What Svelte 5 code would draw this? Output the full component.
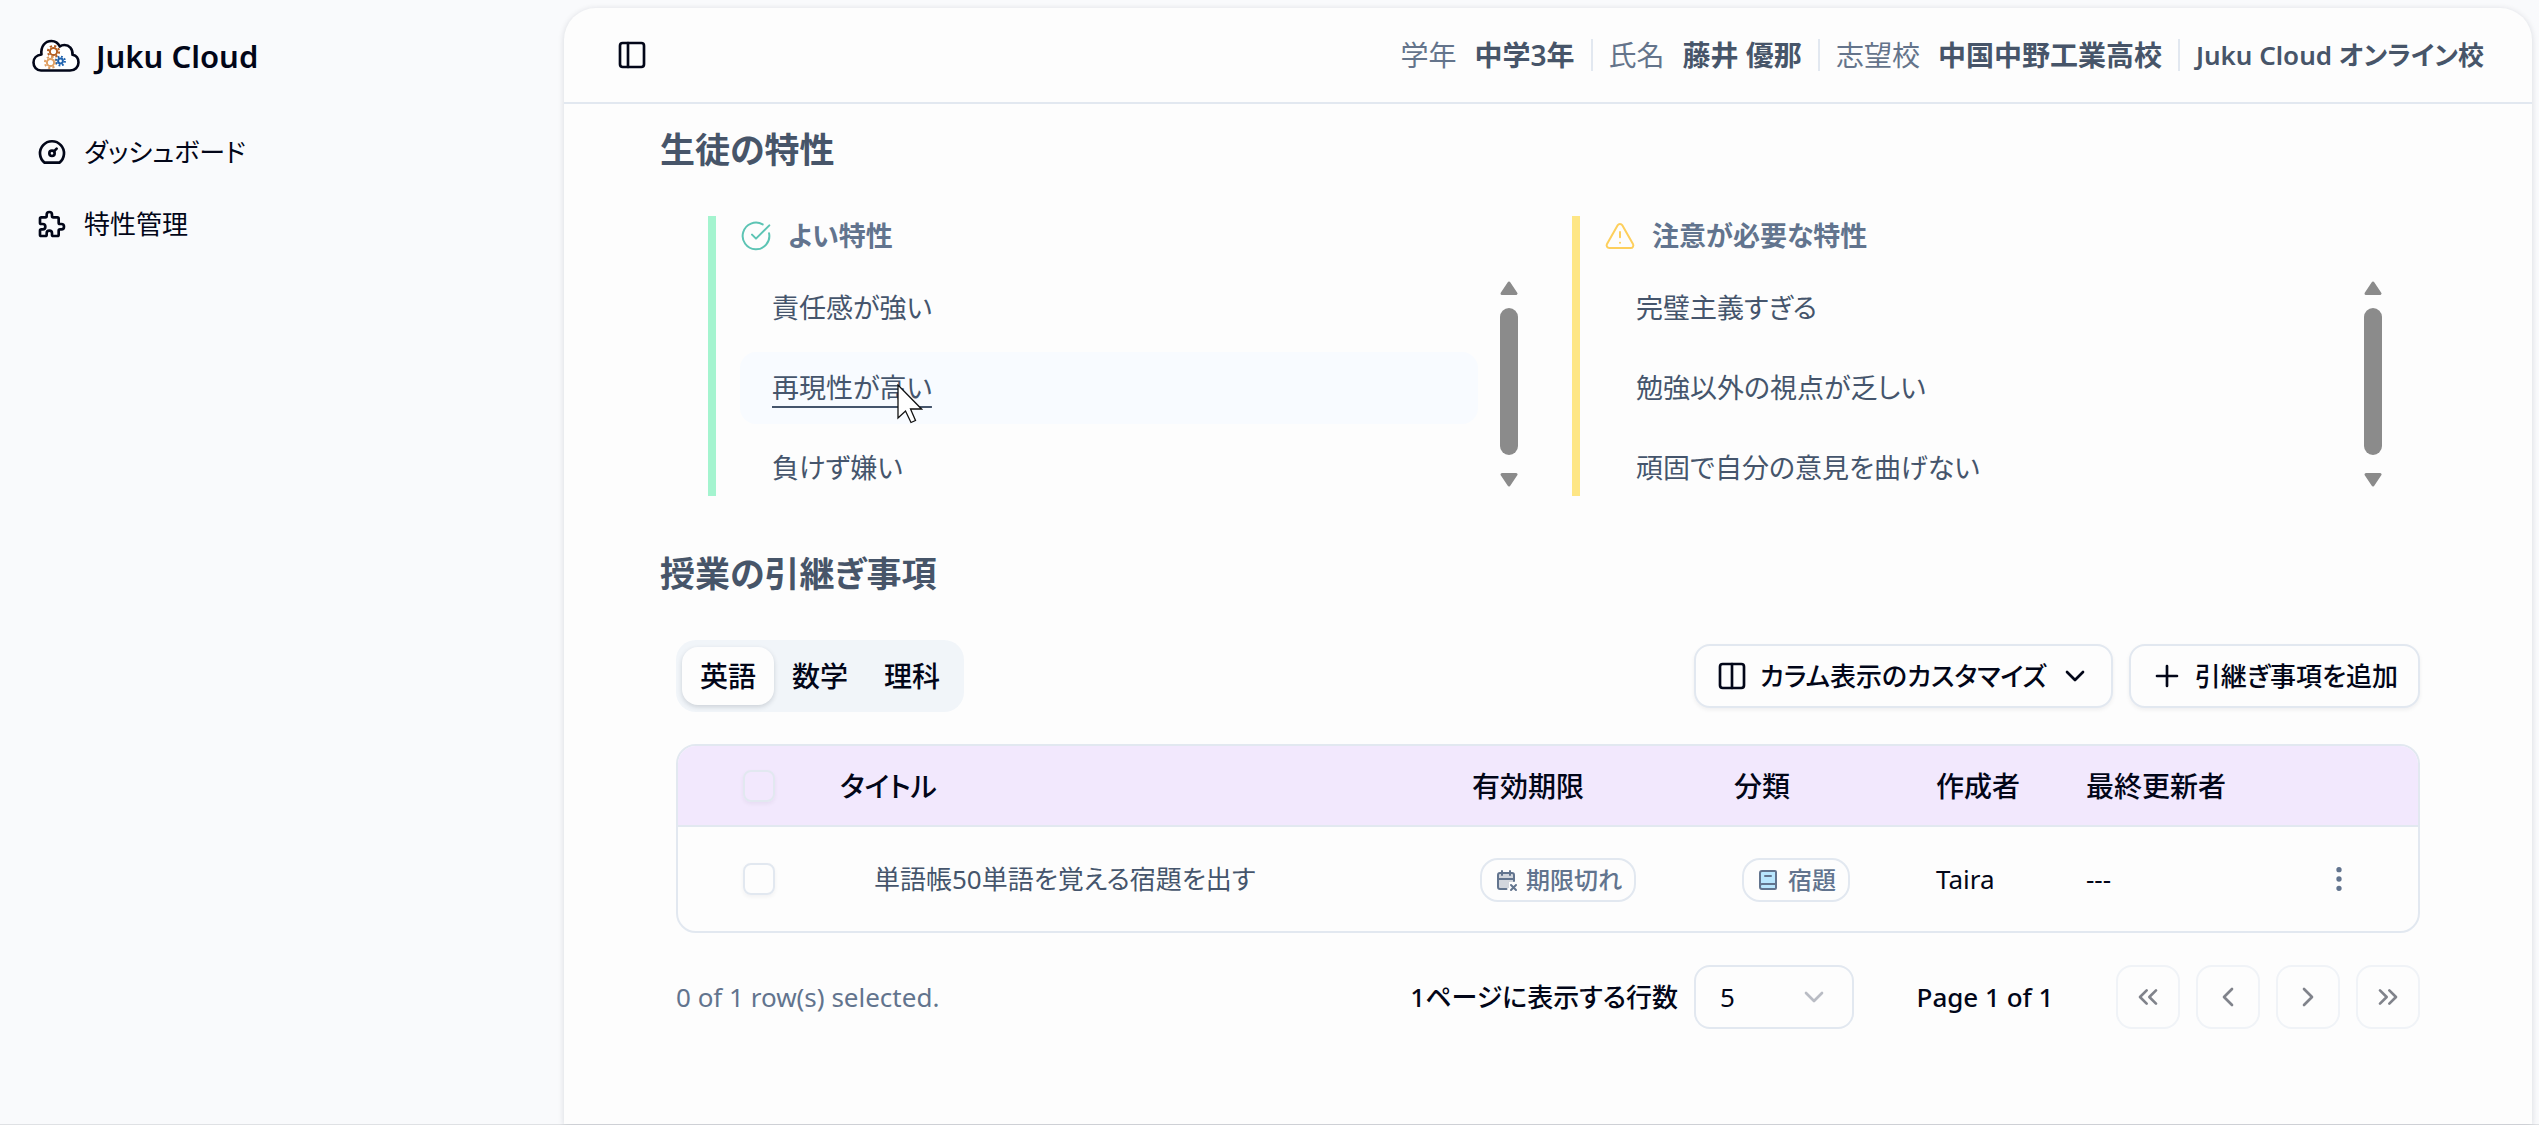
<script>
  const nav = [
    { label: 'ダッシュボード', icon: 'gauge' },
    { label: '特性管理', icon: 'puzzle' }
  ];
  const info = [
    { label: '学年', value: '中学3年' },
    { label: '氏名', value: '藤井 優那' },
    { label: '志望校', value: '中国中野工業高校' }
  ];
  const traits = [
    { kind: 'good', title: 'よい特性', items: ['責任感が強い', '再現性が高い', '負けず嫌い'] },
    { kind: 'care', title: '注意が必要な特性', items: ['完璧主義すぎる', '勉強以外の視点が乏しい', '頑固で自分の意見を曲げない'] }
  ];
  const hovered = '再現性が高い';
  const subjects = ['英語', '数学', '理科'];
  let subject = $state('英語');
  let pageSize = $state('5');
  const pager = [
    { label: '最初のページ', paths: ['m11 17-5-5 5-5', 'm18 17-5-5 5-5'] },
    { label: '前のページ', paths: ['m15 18-6-6 6-6'] },
    { label: '次のページ', paths: ['m9 18 6-6-6-6'] },
    { label: '最後のページ', paths: ['m6 17 5-5-5-5', 'm13 17 5-5-5-5'] }
  ];
</script>

{#snippet gear(cx, cy, r, color)}
  <g transform="translate({cx} {cy})" stroke={color} fill="none">
    <circle r={r} stroke-width="2" />
    <circle r={r + 2} stroke-width="2" stroke-dasharray="{(r + 2) * 0.3927} {(r + 2) * 0.3927}" />
  </g>
{/snippet}

<div class="app">
  <aside class="sidebar">
    <a class="brand" href="#home">
      <svg class="logo" viewBox="0 0 48 34" aria-hidden="true">
        <path d="M9 31.500H38C43 31.500 46.500 28 46.500 23.500C46.500 19.500 44 16.500 40.500 15.800C41 9.500 37 6 32.500 6C30.500 6 29 6.500 27.800 7.500C26 3.800 23 2 19.500 2C13 2 8.500 7.500 9.500 15.500C4.500 16 1.500 19.500 1.500 23.500C1.500 28 4.500 31.500 9 31.500Z" fill="#fff" stroke="#020618" stroke-width="2.600" stroke-linejoin="round" />
        {@render gear(21.5, 12.5, 3.6, '#b45f22')}
        {@render gear(18.5, 23.5, 3.6, '#e0a063')}
        {@render gear(28.5, 22, 2.4, '#1f62ae')}
      </svg>
      <span>Juku Cloud</span>
    </a>
    <nav class="nav" aria-label="メイン">
      {#each nav as item}
        <a class="nav-item" href="#{item.icon}">
          <svg class="icon" viewBox="0 0 24 24" aria-hidden="true">
            {#if item.icon === 'gauge'}
              <path d="M6.400 20a9 9 0 1 1 11.200 0z" />
              <circle cx="12" cy="13" r="2" />
              <path d="M13.450 11.550 15.500 9.500" />
            {:else}
              <path d="M4 7h3a1 1 0 0 0 1-1V5a2 2 0 0 1 4 0v1a1 1 0 0 0 1 1h3a1 1 0 0 1 1 1v3a1 1 0 0 0 1 1h1a2 2 0 0 1 0 4h-1a1 1 0 0 0-1 1v3a1 1 0 0 1-1 1h-3a1 1 0 0 1-1-1v-1a2 2 0 0 0-4 0v1a1 1 0 0 1-1 1H4a1 1 0 0 1-1-1v-3a1 1 0 0 1 1-1h1a2 2 0 0 0 0-4H4a1 1 0 0 1-1-1V8a1 1 0 0 1 1-1" />
            {/if}
          </svg>
          <span>{item.label}</span>
        </a>
      {/each}
    </nav>
  </aside>

  <main class="panel">
    <header class="topbar">
      <button class="toggle" type="button" aria-label="サイドバーの切り替え">
        <svg class="icon" viewBox="0 0 24 24" aria-hidden="true">
          <rect x="3" y="3" width="18" height="18" rx="2" />
          <path d="M9 3v18" />
        </svg>
      </button>
      <div class="info">
        {#each info as part}
          <div class="info-part">
            <span class="info-label">{part.label}</span>
            <span class="info-value">{part.value}</span>
          </div>
        {/each}
        <div class="info-part info-value school">Juku Cloud オンライン校</div>
      </div>
    </header>

    <div class="content">
      <h2>生徒の特性</h2>
      <div class="traits">
        {#each traits as group}
          <section class="trait {group.kind}">
            <h3>
              <svg class="icon trait-icon" viewBox="0 0 24 24" aria-hidden="true">
                {#if group.kind === 'good'}
                  <path d="M21.800 10A10 10 0 1 1 17 3.335" />
                  <path d="m9 11 3 3L22 4" />
                {:else}
                  <path d="m21.730 18-8-14a2 2 0 0 0-3.480 0l-8 14A2 2 0 0 0 4 21h16a2 2 0 0 0 1.730-3" />
                  <path d="M12 9v4" />
                  <path d="M12 17h.01" />
                {/if}
              </svg>
              {group.title}
            </h3>
            <div class="scroller">
              <ul>
                {#each group.items as item}
                  <li class:hovered={item === hovered}>
                    <a href="#trait">{item}</a>
                    {#if item === hovered}
                      <svg class="cursor" viewBox="0 0 26 40" aria-hidden="true">
                        <path d="M1 1V34L8.500 27L14 38.500L18.500 36.500L13.500 25H24.500Z" fill="#fff" stroke="#111" stroke-width="1.300" />
                      </svg>
                    {/if}
                  </li>
                {/each}
              </ul>
              <div class="scrollbar" aria-hidden="true">
                <svg viewBox="0 0 18 14"><path d="M9 2 16 12.500H2Z" /></svg>
                <span class="thumb"></span>
                <svg viewBox="0 0 18 14"><path d="M9 12 16 1.500H2Z" /></svg>
              </div>
            </div>
          </section>
        {/each}
      </div>

      <h2>授業の引継ぎ事項</h2>
      <div class="handover">
        <div class="toolbar">
          <div class="tabs" role="tablist">
            {#each subjects as name}
              <button type="button" role="tab" class="tab" class:active={subject === name} aria-selected={subject === name} onclick={() => (subject = name)}>{name}</button>
            {/each}
          </div>
          <div class="actions">
            <button type="button" class="btn">
              <svg class="icon" viewBox="0 0 24 24" aria-hidden="true">
                <rect x="3" y="3" width="18" height="18" rx="2" />
                <path d="M12 3v18" />
              </svg>
              カラム表示のカスタマイズ
              <svg class="icon" viewBox="0 0 24 24" aria-hidden="true"><path d="m6 9 6 6 6-6" /></svg>
            </button>
            <button type="button" class="btn">
              <svg class="icon" viewBox="0 0 24 24" aria-hidden="true"><path d="M4.500 12h15M12 4.500v15" /></svg>
              引継ぎ事項を追加
            </button>
          </div>
        </div>

        <div class="table-wrap">
          <table>
            <colgroup>
              <col class="c-check" />
              <col />
              <col class="c-limit" />
              <col class="c-kind" />
              <col class="c-author" />
              <col class="c-editor" />
              <col class="c-menu" />
            </colgroup>
            <thead>
              <tr>
                <th class="check"><input type="checkbox" aria-label="すべて選択" /></th>
                <th>タイトル</th>
                <th>有効期限</th>
                <th>分類</th>
                <th>作成者</th>
                <th>最終更新者</th>
                <th aria-label="操作"></th>
              </tr>
            </thead>
            <tbody>
              <tr>
                <td class="check"><input type="checkbox" aria-label="行を選択" /></td>
                <td class="title"><a href="#item">単語帳50単語を覚える宿題を出す</a></td>
                <td>
                  <span class="badge">
                    <svg class="badge-icon" viewBox="0 0 24 24" aria-hidden="true">
                      <path d="M4 5h16v9h-5v6H4Z" fill="#64748b" fill-opacity=".28" stroke="none" />
                      <path d="M12.500 21H6a2 2 0 0 1-2-2V7a2 2 0 0 1 2-2h12a2 2 0 0 1 2 2v6M16 3v4M8 3v4M4 11h16M22 22l-5-5M17 22l5-5" />
                    </svg>
                    期限切れ
                  </span>
                </td>
                <td>
                  <span class="badge">
                    <svg class="badge-icon" viewBox="0 0 24 24" aria-hidden="true">
                      <path d="M6 3h13a1 1 0 0 1 1 1v16a1 1 0 0 1-1 1H6a2 2 0 0 1-2-2V5a2 2 0 0 1 2-2Z" fill="#b8e6fe" />
                      <path d="M4 18a2 2 0 0 1 2-2h14M9 8h6" />
                    </svg>
                    宿題
                  </span>
                </td>
                <td>Taira</td>
                <td>---</td>
                <td class="menu">
                  <button type="button" class="dots" aria-label="メニューを開く">
                    <svg class="icon" viewBox="0 0 24 24" aria-hidden="true">
                      <circle cx="12" cy="5" r="1" /><circle cx="12" cy="12" r="1" /><circle cx="12" cy="19" r="1" />
                    </svg>
                  </button>
                </td>
              </tr>
            </tbody>
          </table>
        </div>

        <div class="footer">
          <p class="selected">0 of 1 row(s) selected.</p>
          <div class="size">
            <label for="page-size">1ページに表示する行数</label>
            <span class="select">
              <select id="page-size" bind:value={pageSize}>
                <option>5</option>
                <option>10</option>
                <option>20</option>
              </select>
              <svg class="icon" viewBox="0 0 24 24" aria-hidden="true"><path d="m6 9 6 6 6-6" /></svg>
            </span>
          </div>
          <p class="page">Page 1 of 1</p>
          <div class="pager">
            {#each pager as p}
              <button type="button" disabled aria-label={p.label}>
                <svg class="icon" viewBox="0 0 24 24" aria-hidden="true">
                  {#each p.paths as d}<path {d} />{/each}
                </svg>
              </button>
            {/each}
          </div>
        </div>
      </div>
    </div>
  </main>
</div>

<style>
  :global(body) {
    background: #f9fafc;
  }
  .app {
    box-sizing: border-box;
    display: grid;
    grid-template-columns: 564px minmax(0, 1fr);
    min-height: 100vh;
    padding: 8px 7px 0 0;
    border-bottom: 1px solid #dfe1e4;
    font: 400 28px/40px 'Noto Sans', 'Noto Sans CJK JP', sans-serif;
    font-feature-settings: 'palt';
    color: #020618;
  }
  .app :is(h2, h3, p, ul) {
    margin: 0;
    padding: 0;
  }
  a {
    color: inherit;
    text-decoration: none;
  }
  button,
  select {
    font: inherit;
    font-feature-settings: inherit;
    color: inherit;
  }
  .icon {
    flex: none;
    width: 32px;
    height: 32px;
    fill: none;
    stroke: currentColor;
    stroke-width: 2;
    stroke-linecap: round;
    stroke-linejoin: round;
  }

  .sidebar {
    padding: 16px 32px;
  }
  .brand {
    display: flex;
    align-items: center;
    gap: 16px;
    height: 64px;
    font-size: 31px;
    font-weight: 600;
  }
  .logo {
    width: 48px;
    height: 34px;
  }
  .nav {
    display: grid;
    gap: 8px;
    margin-top: 32px;
    font-size: 26px;
  }
  .nav-item {
    display: flex;
    align-items: center;
    gap: 16px;
    height: 64px;
    padding-left: 4px;
  }

  .panel {
    background: #fdfdfd;
    border-radius: 32px 32px 0 0;
    box-shadow: 0 1px 6px rgb(15 23 42 / 14%);
  }
  .topbar {
    box-sizing: border-box;
    display: flex;
    align-items: center;
    justify-content: space-between;
    height: 96px;
    padding: 0 48px 0 44px;
    border-bottom: 2px solid #e2e8f0;
  }
  .toggle {
    display: flex;
    padding: 8px;
    border: 0;
    background: none;
  }
  .info {
    display: flex;
    color: #475569;
  }
  .info-part {
    display: flex;
    align-items: center;
    gap: 18px;
    height: 32px;
  }
  .info-part + .info-part {
    margin-left: 16px;
    padding-left: 16px;
    border-left: 2px solid #e2e8f0;
  }
  .info-label {
    color: #64748b;
  }
  .info-value {
    font-weight: 600;
  }
  .school {
    font-size: 26px;
  }

  .content {
    padding: 18px 96px 64px;
  }
  h2 {
    font-size: 35px;
    line-height: 56px;
    font-weight: 600;
    color: #475569;
  }
  .traits {
    display: grid;
    grid-template-columns: 1fr 1fr;
    gap: 48px;
    margin: 38px 48px 50px;
  }
  .trait {
    padding-left: 24px;
    border-left: 8px solid #a4f4cf;
  }
  .trait.care {
    border-color: #fee685;
  }
  h3 {
    display: flex;
    align-items: center;
    gap: 16px;
    font-size: 27px;
    line-height: 40px;
    font-weight: 600;
    color: #62748e;
  }
  .trait-icon {
    stroke: #5cc4b4;
    stroke-width: 1.5;
  }
  .care .trait-icon {
    stroke: #fdcf5c;
  }
  .scroller {
    display: flex;
    gap: 16px;
    height: 224px;
    margin-top: 16px;
    overflow: hidden;
    font-size: 27px;
  }
  ul {
    flex: 1;
    display: flex;
    flex-direction: column;
    gap: 8px;
    list-style: none;
  }
  li {
    position: relative;
    flex: none;
    box-sizing: border-box;
    height: 72px;
    padding: 16px 32px;
    border-radius: 16px;
    color: #45556c;
  }
  .hovered {
    background: #f8fbff;
  }
  .hovered a {
    text-decoration: underline;
    text-decoration-thickness: 2px;
    text-underline-offset: 8px;
  }
  .cursor {
    position: absolute;
    left: 157px;
    top: 32px;
    width: 26px;
    height: 40px;
  }
  .scrollbar {
    display: flex;
    flex-direction: column;
    align-items: center;
    box-sizing: border-box;
    width: 30px;
    padding: 9px 0;
  }
  .scrollbar svg {
    width: 18px;
    height: 14px;
    fill: #8b8b8b;
    stroke: #8b8b8b;
    stroke-width: 3;
    stroke-linejoin: round;
  }
  .thumb {
    width: 18px;
    height: 147px;
    margin: 13px 0 18px;
    border-radius: 9px;
    background: #8b8b8b;
  }

  .handover {
    padding: 0 16px;
  }
  .toolbar {
    display: flex;
    align-items: center;
    justify-content: space-between;
    margin-top: 38px;
  }
  .tabs {
    display: flex;
    box-sizing: border-box;
    height: 72px;
    padding: 7px 6px;
    border-radius: 20px;
    background: #f1f5f9;
  }
  .tab {
    width: 92px;
    padding: 0;
    border: 0;
    border-radius: 16px;
    background: none;
    font-weight: 500;
  }
  .tab.active {
    background: #fdfdfd;
    box-shadow: 0 2px 5px rgb(15 23 42 / 16%);
  }
  .actions {
    display: flex;
    gap: 16px;
  }
  .btn {
    display: flex;
    align-items: center;
    gap: 12px;
    box-sizing: border-box;
    height: 64px;
    padding: 0 20px;
    border: 2px solid #e2e8f0;
    border-radius: 16px;
    background: #fdfdfd;
    box-shadow: 0 2px 4px rgb(15 23 42 / 6%);
    font-size: 26px;
    font-weight: 500;
  }

  .table-wrap {
    margin-top: 32px;
    border: 2px solid #e2e8f0;
    border-radius: 20px;
    overflow: hidden;
  }
  table {
    width: 100%;
    table-layout: fixed;
    border-collapse: collapse;
  }
  .c-check {
    width: 146px;
  }
  .c-limit {
    width: 262px;
  }
  .c-kind {
    width: 202px;
  }
  .c-author {
    width: 150px;
  }
  .c-editor {
    width: 190px;
  }
  .c-menu {
    width: 158px;
  }
  th,
  td {
    padding: 0 16px;
    text-align: left;
    white-space: nowrap;
  }
  th {
    height: 79px;
    background: #f2e8fd;
    border-bottom: 2px solid #e2e8f0;
    font-weight: 500;
  }
  td {
    height: 104px;
    font-size: 26px;
  }
  .check {
    padding: 0 0 0 65px;
  }
  input {
    display: block;
    appearance: none;
    width: 32px;
    height: 32px;
    margin: 0;
    border: 2px solid #e2e8f0;
    border-radius: 8px;
    box-shadow: 0 2px 4px rgb(15 23 42 / 5%);
  }
  .title {
    padding-left: 50px;
    color: #45556c;
  }
  .badge {
    display: inline-flex;
    align-items: center;
    gap: 8px;
    box-sizing: border-box;
    height: 44px;
    margin-left: 8px;
    padding: 0 12px;
    border: 2px solid #e2e8f0;
    border-radius: 18px;
    font-size: 24px;
    line-height: 32px;
    font-weight: 500;
    color: #62748e;
    vertical-align: middle;
  }
  .badge-icon {
    width: 24px;
    height: 24px;
    fill: none;
    stroke: currentColor;
    stroke-width: 2;
    stroke-linecap: round;
    stroke-linejoin: round;
  }
  .menu {
    text-align: center;
  }
  .dots {
    display: inline-flex;
    padding: 8px;
    border: 0;
    background: none;
    color: #62748e;
    vertical-align: middle;
  }

  .footer {
    display: flex;
    align-items: center;
    margin-top: 32px;
    font-size: 26px;
    font-weight: 500;
  }
  .selected {
    flex: 1;
    font-weight: 400;
    color: #62748e;
  }
  .size {
    display: flex;
    align-items: center;
    gap: 16px;
  }
  .select {
    display: grid;
    align-items: center;
    width: 160px;
  }
  .select > :global(*) {
    grid-area: 1 / 1;
  }
  select {
    box-sizing: border-box;
    appearance: none;
    width: 100%;
    height: 64px;
    padding: 0 24px;
    border: 2px solid #e2e8f0;
    border-radius: 16px;
    background: #fdfdfd;
    font-weight: 400;
  }
  .select .icon {
    justify-self: end;
    margin-right: 24px;
    color: #b9bcc4;
    pointer-events: none;
  }
  .page {
    width: 262px;
    text-align: center;
  }
  .pager {
    display: flex;
    gap: 16px;
  }
  .pager button {
    display: flex;
    align-items: center;
    justify-content: center;
    width: 64px;
    height: 64px;
    padding: 0;
    border: 2px solid #f0f3f7;
    border-radius: 16px;
    background: #fdfdfd;
    color: #80838b;
  }
</style>
